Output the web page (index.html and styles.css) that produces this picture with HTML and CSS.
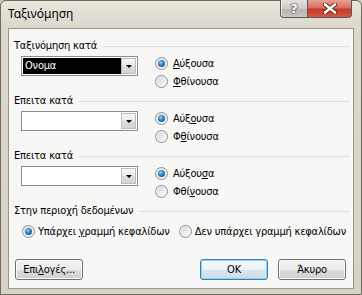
FILE: index.html
```html
<!DOCTYPE html>
<html lang="el">
<head>
<meta charset="utf-8">
<title>Ταξινόμηση</title>
<link rel="stylesheet" href="styles.css">
</head>
<body>
<div class="window">
  <div class="titlebar">
    <span class="title">Ταξινόμηση</span>
    <div class="caption-buttons">
      <div class="cap-btn help"><span>?</span></div>
      <div class="cap-btn close">
        <svg width="16" height="11" viewBox="0 0 16 11">
          <path d="M3 1.5 L13 9.5 M13 1.5 L3 9.5" stroke="#5a1a14" stroke-width="4.2" stroke-linecap="round"/>
          <path d="M3 1.5 L13 9.5 M13 1.5 L3 9.5" stroke="#ffffff" stroke-width="2.6" stroke-linecap="round"/>
        </svg>
      </div>
    </div>
  </div>
  <div class="client">
    <section class="group">
      <div class="group-label"><span>Ταξινόμηση κατά</span></div>
      <div class="group-body">
        <div class="combo focused"><span class="combo-value">Ονομα</span><span class="combo-btn"></span></div>
        <div class="radios">
          <div class="radio checked"><span class="dot"></span><span><u>Α</u>ύξουσα</span></div>
          <div class="radio"><span class="dot"></span><span><u>Φ</u>θίνουσα</span></div>
        </div>
      </div>
    </section>
    <section class="group">
      <div class="group-label"><span>Επειτα κατά</span></div>
      <div class="group-body">
        <div class="combo"><span class="combo-value"></span><span class="combo-btn"></span></div>
        <div class="radios">
          <div class="radio checked"><span class="dot"></span><span>Αύξ<u>ο</u>υσα</span></div>
          <div class="radio"><span class="dot"></span><span>Φ<u>θ</u>ίνουσα</span></div>
        </div>
      </div>
    </section>
    <section class="group">
      <div class="group-label"><span>Επειτα κατά</span></div>
      <div class="group-body">
        <div class="combo"><span class="combo-value"></span><span class="combo-btn"></span></div>
        <div class="radios">
          <div class="radio checked"><span class="dot"></span><span>Αύξου<u>σ</u>α</span></div>
          <div class="radio"><span class="dot"></span><span>Φθί<u>ν</u>ουσα</span></div>
        </div>
      </div>
    </section>
    <section class="group data">
      <div class="group-label"><span>Στην περιοχή δεδομένων</span></div>
      <div class="header-row">
        <div class="radio checked small-gap first"><span class="dot"></span><span>Υπάρχει <u>γ</u>ραμμή κεφαλίδων</span></div>
        <div class="radio small-gap"><span class="dot"></span><span>Δεν υπάρ<u>χ</u>ει γραμμή κεφαλίδων</span></div>
      </div>
    </section>
    <div class="button-row">
      <button class="btn">Επι<u>λ</u>ογές...</button>
      <div class="button-group">
        <button class="btn default">OK</button>
        <button class="btn">Άκυρο</button>
      </div>
    </div>
  </div>
</div>
</body>
</html>
```
FILE: styles.css
```css
* { box-sizing: border-box; }
html, body { margin: 0; padding: 0; }
body {
  width: 362px;
  height: 295px;
  overflow: hidden;
  background: #cfc9bb;
  font-family: "DejaVu Sans Condensed", "DejaVu Sans", sans-serif;
  font-size: 11px;
  letter-spacing: -0.2px;
  color: #000;
}
.window {
  width: 362px;
  height: 295px;
  display: flex;
  flex-direction: column;
  background: linear-gradient(to bottom, #eae6dd 0, #ddd8cc 26px, #d8d2c4 100%);
  border: 1px solid #6f6a5f;
  border-radius: 6px 6px 0 0;
  padding: 0 7px 5px 7px;
}
.titlebar {
  height: 27px;
  display: flex;
  justify-content: space-between;
  align-items: flex-start;
}
.title {
  font-family: "Noto Sans", "Open Sans", sans-serif;
  font-size: 12px;
  letter-spacing: 0;
  line-height: 16px;
  padding-top: 5px;
  color: #000;
}
.caption-buttons {
  display: flex;
  margin-top: -1px;
  margin-right: 2px;
}
.cap-btn {
  height: 18px;
  display: flex;
  align-items: center;
  justify-content: center;
  border: 1px solid #5c5850;
  border-top: none;
}
.help {
  width: 27px;
  border-radius: 0 0 0 4px;
  border-right: none;
  background: linear-gradient(to bottom, #e4e2de 0, #cfccc6 50%, #b7b4ad 51%, #c9c6c0 100%);
  box-shadow: inset 1px 0 0 rgba(255,255,255,0.6);
}
.help span {
  font-family: "DejaVu Sans", sans-serif;
  font-weight: bold;
  font-size: 13px;
  line-height: 13px;
  letter-spacing: 0;
  color: #fff;
  text-shadow: 0 0 1px #333, 0 0 1px #333, 0 0 2px #555;
}
.close {
  width: 45px;
  border-radius: 0 0 4px 0;
  background: linear-gradient(to bottom, #e5a394 0, #d6705f 45%, #c13a28 55%, #d45a44 100%);
}
.close svg { display: block; }
.client {
  flex: 1;
  background: #f7f7f5;
  border: 1px solid #9b968a;
  padding: 10px 7px 0 5px;
  display: flex;
  flex-direction: column;
}
.group + .group { margin-top: 4px; }
.group-label {
  display: flex;
  align-items: center;
  gap: 6px;
  height: 13px;
  line-height: 13px;
  margin-right: -4px;
}
.group-label::after {
  content: "";
  flex: 1;
  height: 1px;
  background: #dddddd;
  margin-top: 1px;
}
.group-body {
  display: flex;
  margin-top: 2px;
  height: 36px;
}
.combo {
  width: 117px;
  height: 20px;
  margin-left: 7px;
  margin-top: 2px;
  border: 1px solid #8d8d8d;
  background: #fff;
  display: flex;
  padding: 1px;
}
.combo-value {
  flex: 1;
  line-height: 16px;
  padding-left: 2px;
}
.combo.focused .combo-value {
  background: #000;
  color: #fff;
}
.combo-btn {
  width: 15px;
  border: 1px solid #bdbdbd;
  background: linear-gradient(to bottom, #f6f6f6 0, #e9e9e9 50%, #dcdcdc 51%, #d4d4d4 100%);
  display: flex;
  align-items: center;
  justify-content: center;
}
.combo-btn::before {
  content: "";
  width: 0;
  height: 0;
  border-left: 3px solid transparent;
  border-right: 3px solid transparent;
  border-top: 3px solid #000;
  margin-top: 1px;
}
.radios {
  display: flex;
  flex-direction: column;
  margin-left: 17px;
}
.radio {
  display: flex;
  align-items: center;
  gap: 5px;
  height: 18px;
  white-space: nowrap;
}
.radio.small-gap { gap: 3px; }
.dot {
  position: relative;
  width: 13px;
  height: 13px;
  border-radius: 50%;
  border: 1px solid #8e8f8f;
  background: linear-gradient(135deg, #d0d3d8 0, #e8e9eb 50%, #fbfbfb 100%);
  box-shadow: inset 0 0 0 1px #f4f4f4;
  flex: none;
}
.radio.checked .dot::after {
  content: "";
  position: absolute;
  left: 2px;
  top: 2px;
  width: 7px;
  height: 7px;
  border-radius: 50%;
  background: radial-gradient(circle at 40% 35%, #9fd4f6 0, #3a8fd0 35%, #12558f 80%, #0d3f6e 100%);
}
.header-row {
  display: flex;
  margin-top: 5px;
  margin-left: 8px;
}
.header-row .first { width: 160px; }
.button-row {
  display: flex;
  justify-content: space-between;
  margin-top: 19px;
  padding-left: 1px;
}
.button-group {
  display: flex;
  gap: 10px;
}
.btn {
  width: 68px;
  height: 21px;
  padding: 0;
  font-family: "DejaVu Sans Condensed", "DejaVu Sans", sans-serif;
  font-size: 11px;
  letter-spacing: -0.2px;
  color: #000;
  border: 1px solid #707070;
  border-radius: 3px;
  background: linear-gradient(to bottom, #f2f2f2 0, #ebebeb 50%, #dddddd 51%, #cfcfcf 100%);
  box-shadow: inset 0 0 0 1px #fcfcfc;
}
.btn.default {
  border-color: #3c7fb1;
  background: linear-gradient(to bottom, #f4f8fb 0, #e9f1f7 50%, #d9e6ef 51%, #cfdde8 100%);
  box-shadow: inset 0 0 0 1px #8fd1f2;
}
```
